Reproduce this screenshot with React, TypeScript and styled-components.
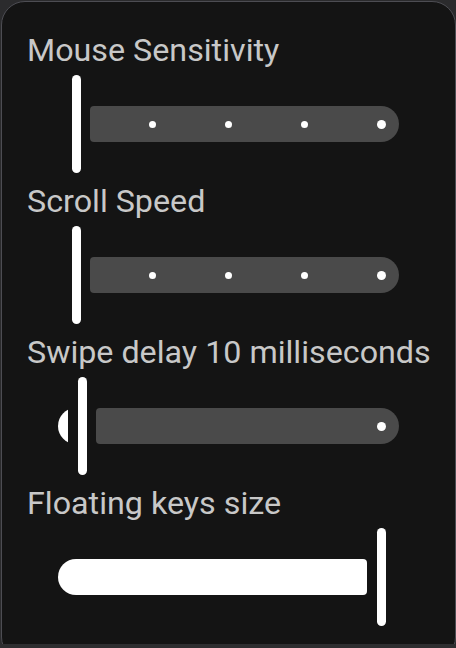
import React from 'react';
import styled, { createGlobalStyle } from 'styled-components';

const GlobalStyle = createGlobalStyle`
  html, body {
    margin: 0;
    padding: 0;
    background: #2b2b2d;
    overflow: hidden;
  }
  body {
    font-family: Roboto, "Noto Sans", sans-serif;
  }
`;

const Page = styled.div`
  width: 456px;
  height: 648px;
  display: flex;
  flex-direction: column;
  overflow: hidden;
`;

const CardArea = styled.div`
  height: 643px;
  padding: 1px 0 0 1px;
  overflow: hidden;
  flex-shrink: 0;
`;

const BottomStrip = styled.div`
  flex: 1;
  background: #2e2e30;
`;

const Card = styled.div`
  width: 455px;
  height: 660px;
  box-sizing: border-box;
  background: #141414;
  border: 1px solid #4d4d53;
  border-radius: 24px;
  padding: 29px 24px 0;
  display: flex;
  flex-direction: column;
  gap: 9px;
`;

const Section = styled.div`
  display: flex;
  flex-direction: column;
`;

const Label = styled.div`
  font-size: 32.25px;
  line-height: 38px;
  color: #c8c8c8;
  margin: 0 0 6px 1px;
  white-space: nowrap;
`;

// slider geometry (px)
const SLIDER_WIDTH = 341;
const TRACK_H = 36;
const INSET = TRACK_H / 2;
const THUMB_W = 9;
const GAP = 9.5;
const RANGE = SLIDER_WIDTH - INSET * 2;

const SliderRow = styled.div`
  position: relative;
  width: ${SLIDER_WIDTH}px;
  height: 98px;
  margin-left: 32px;
  display: flex;
  align-items: center;
`;

// the fill is clipped, so a short one shows only part of its round end
const ActiveTrack = styled.div<{ $hidden: boolean }>`
  height: ${TRACK_H}px;
  flex-shrink: 0;
  margin-right: ${GAP}px;
  overflow: hidden;
  visibility: ${(p) => (p.$hidden ? 'hidden' : 'visible')};

  &::before {
    content: '';
    display: block;
    height: 100%;
    width: 100%;
    min-width: 44px;
    background: #ffffff;
    border-radius: 18px 4px 4px 18px;
  }
`;

const Thumb = styled.div`
  width: ${THUMB_W}px;
  height: 98px;
  flex-shrink: 0;
  background: #ffffff;
  border-radius: 5px;
`;

const InactiveTrack = styled.div<{ $hidden: boolean }>`
  flex: 1;
  height: ${TRACK_H}px;
  margin-left: ${GAP}px;
  background: ${(p) => (p.$hidden ? 'transparent' : '#4a4a4a')};
  border-radius: 4px 18px 18px 4px;
`;

const Tick = styled.span<{ $size: number }>`
  position: absolute;
  top: 50%;
  width: ${(p) => p.$size}px;
  height: ${(p) => p.$size}px;
  margin: ${(p) => -p.$size / 2}px 0 0 ${(p) => -p.$size / 2}px;
  border-radius: 50%;
  background: #ffffff;
`;

type SliderProps = {
  value: number; // 0..1
  steps?: number;
};

const Slider: React.FC<SliderProps> = ({ value, steps }) => {
  const center = INSET + value * RANGE;
  const activeW = center - THUMB_W / 2 - GAP;
  const inactiveW = SLIDER_WIDTH - center - THUMB_W / 2 - GAP;

  const stops: number[] = steps
    ? Array.from({ length: steps + 1 }, (_, i) => INSET + (i * RANGE) / steps)
    : [INSET + RANGE];

  return (
    <SliderRow>
      <ActiveTrack $hidden={activeW < 8} style={{ width: Math.max(0, activeW) }} />
      <Thumb />
      <InactiveTrack $hidden={inactiveW < 8} />
      {stops
        .filter((x) => x > center + 20)
        .map((x, i, arr) => (
          <Tick key={x} $size={i === arr.length - 1 ? 9 : 7} style={{ left: x }} />
        ))}
    </SliderRow>
  );
};

const settings = [
  { label: 'Mouse Sensitivity', value: 0, steps: 4 },
  { label: 'Scroll Speed', value: 0, steps: 4 },
  { label: 'Swipe delay 10 milliseconds', value: 0.021 },
  { label: 'Floating keys size', value: 1 },
];

const App: React.FC = () => {
  return (
    <>
      <GlobalStyle />
      <Page>
        <CardArea>
          <Card>
            {settings.map((s) => (
              <Section key={s.label}>
                <Label>{s.label}</Label>
                <Slider value={s.value} steps={s.steps} />
              </Section>
            ))}
          </Card>
        </CardArea>
        <BottomStrip />
      </Page>
    </>
  );
};

export default App;
